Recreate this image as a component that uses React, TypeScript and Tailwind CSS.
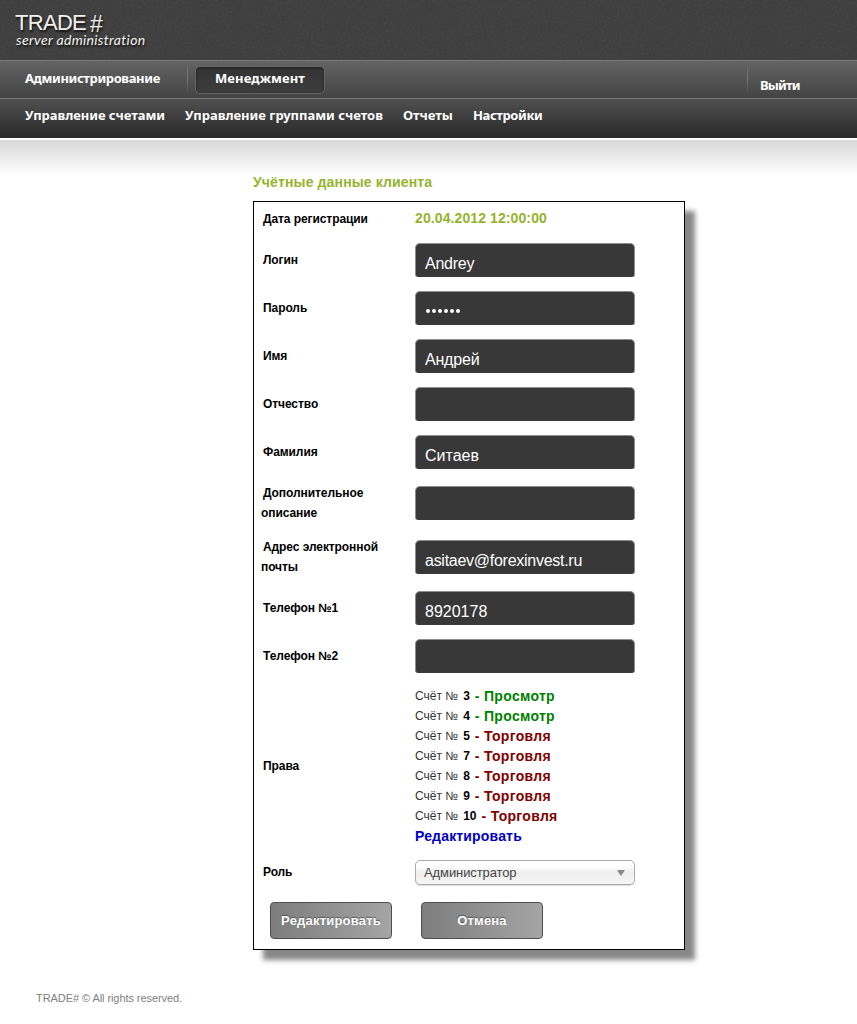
import React from "react";

const mainFont = "font-['Liberation_Sans',Arial,sans-serif]";
const navFont = "font-['Noto_Sans',Tahoma,sans-serif]";

type Field = { label: string; value: string; spacing?: string; tall?: boolean };

const fields: Field[] = [
  { label: "Логин", value: "Andrey", spacing: "tracking-[-0.25px]" },
  { label: "Пароль", value: "••••••" },
  { label: "Имя", value: "Андрей", spacing: "tracking-[-0.2px]" },
  { label: "Отчество", value: "" },
  { label: "Фамилия", value: "Ситаев" },
  { label: "Дополнительное описание", value: "", tall: true },
  { label: "Адрес электронной почты", value: "asitaev@forexinvest.ru", spacing: "tracking-[-0.27px]", tall: true },
  { label: "Телефон №1", value: "8920178" },
  { label: "Телефон №2", value: "" },
];

const accounts = [
  { id: 3, trade: false },
  { id: 4, trade: false },
  { id: 5, trade: true },
  { id: 7, trade: true },
  { id: 8, trade: true },
  { id: 9, trade: true },
  { id: 10, trade: true },
];

function Label({ children }: { children: string }) {
  return (
    <div className="w-[154px] shrink-0 pl-[7px] pr-6 text-[12px] font-bold leading-5 tracking-[-0.08px] text-black">
      <span className="ml-[2px]">{children}</span>
    </div>
  );
}

function Header() {
  return (
    <header className="relative h-[60px] overflow-hidden bg-[#3c3c3c] pl-[15px] pt-[14px] text-[#f2f0ec]">
      <svg className="absolute inset-0 h-full w-full opacity-[0.07]" aria-hidden="true">
        <filter id="grain">
          <feTurbulence type="fractalNoise" baseFrequency="0.45" numOctaves="2" seed="4" />
          <feColorMatrix type="saturate" values="0" />
        </filter>
        <rect width="100%" height="100%" filter="url(#grain)" />
      </svg>
      <div className="relative flex h-[18px] items-center whitespace-nowrap text-[22px] leading-[18px] [text-shadow:1px_2px_2px_#111]">
        <span className="w-[75px] tracking-[-0.7px]">TRADE</span>
        <span className="pt-px text-[23px]">#</span>
      </div>
      <div className="relative ml-px whitespace-nowrap font-[Lato,'Open_Sans',sans-serif] text-[14px] italic leading-4 tracking-[0.33px] [text-shadow:1px_2px_2px_#111]">
        server administration
      </div>
    </header>
  );
}

function Nav() {
  return (
    <nav className={`${navFont} text-[13px] font-bold leading-[18px] text-white whitespace-nowrap`}>
      <div className="flex h-[38px] border-t border-[#7a7a7a] bg-linear-to-b from-[#646464] to-[#434343] pl-[25px]">
        <span className="w-[162px] pt-[8px] tracking-[-0.38px]">Администрирование</span>
        <span className="mt-1 h-7 w-px bg-linear-to-b from-[#6a6a6a] via-[#777] to-[#4c4c4c]" />
        <span className="ml-[7px] mt-[5px] flex h-7 w-[130px] justify-center rounded-[5px] border border-[#636363] bg-linear-to-b from-[#333] to-[#3d3d3d] pt-[2px] tracking-[0.1px] shadow-[inset_0_1px_3px_#222]">
          Менеджмент
        </span>
        <span className="ml-auto mt-1 h-7 w-px bg-linear-to-b from-[#626262] via-[#777] to-[#4c4c4c]" />
        <span className="w-[109px] pl-3 pt-[15px] tracking-[-0.8px]">Выйти</span>
      </div>
      <div className="flex h-10 gap-5 border-t border-[#777] bg-linear-to-b from-[#505050] to-[#292929] pl-[25px] pt-[7px]">
        <span className="tracking-[-0.05px]">Управление счетами</span>
        <span className="tracking-[-0.02px]">Управление группами счетов</span>
        <span>Отчеты</span>
        <span className="tracking-[-0.4px]">Настройки</span>
      </div>
    </nav>
  );
}

function FieldRow({ field }: { field: Field }) {
  return (
    <div className={`flex items-center ${field.tall ? "h-[54px]" : "h-12"}`}>
      <Label>{field.label}</Label>
      <div className="ml-[7px] flex h-[34px] w-[220px] items-center rounded-t-[5px] rounded-b-[3px] border border-b-0 border-[#8d8d8d] bg-[#383838] pl-[9px] pt-[7px] text-[16px] leading-5 text-white">
        {field.value.startsWith("•") ? (
          <span className="mb-[2px] flex gap-[2px] pl-px">
            {Array.from(field.value).map((_, i) => (
              <span key={i} className="h-1 w-1 rounded-full bg-white" />
            ))}
          </span>
        ) : (
          <span className={field.spacing ?? ""}>{field.value}</span>
        )}
      </div>
    </div>
  );
}

function FormButton({ children }: { children: string }) {
  return (
    <button className="h-[37px] w-[122px] rounded-[4px] border border-[#4f4f4f] bg-linear-to-r from-[#7d7d7d] to-[#a5a5a5] text-[13px] font-bold tracking-[0.2px] text-white [text-shadow:0_-1px_1px_#555]">
      {children}
    </button>
  );
}

export default function App() {
  return (
    <div className={`${mainFont} flex h-[1024px] w-[857px] flex-col bg-white`}>
      <Header />
      <Nav />
      <main className="mt-[2px] flex-1 bg-linear-to-b from-[#d8d8d8] to-white bg-[length:100%_36px] bg-no-repeat pl-[253px] pt-8">
        <h1 className="h-[29px] text-[14px] font-bold leading-5 tracking-[0.13px] text-[#95b42e]">Учётные данные клиента</h1>
        <section className="h-[749px] w-[432px] border border-black bg-white shadow-[10px_10px_5px_#888]">
          <div className="flex h-[34px] items-center">
            <Label>Дата регистрации</Label>
            <span className="mb-[2px] ml-[7px] text-[14px] font-bold leading-5 tracking-[0.1px] text-[#95b42e]">20.04.2012 12:00:00</span>
          </div>
          {fields.map((field) => (
            <FieldRow key={field.label} field={field} />
          ))}
          <div className="flex h-[172px] items-center">
            <Label>Права</Label>
            <div className="ml-[7px] text-[14px] font-bold leading-5">
              {accounts.map((account) => (
                <div key={account.id} className="flex h-5 items-center whitespace-pre">
                  <span className="text-[12px] font-normal text-[#333]">Счёт №</span>
                  <span className="ml-[5px] text-[12px] text-black">{account.id}</span>
                  <span className={account.trade ? "ml-[5px] tracking-[0.3px] text-[#800000]" : "ml-[5px] tracking-[0.3px] text-[#008000]"}>
                    {account.trade ? "- Торговля" : "- Просмотр"}
                  </span>
                </div>
              ))}
              <a className="block tracking-[0.17px] text-[#0000c4]">Редактировать</a>
            </div>
          </div>
          <div className="flex h-[41px] items-center">
            <div className="mb-[2px]">
              <Label>Роль</Label>
            </div>
            <div className="ml-[7px] flex h-[25px] w-[220px] items-center justify-between rounded-[5px] border border-[#aaa] bg-linear-to-b from-white from-20% via-[#eee] via-52% to-[#f6f6f6] pl-2 pr-[9px] pt-px text-[13px] tracking-[-0.1px] text-[#444] shadow-[0_1px_1px_#ddd]">
              <span>Администратор</span>
              <svg width="8" height="6" viewBox="0 0 8 6">
                <path d="M0 0h8L4 6z" fill="#888" />
              </svg>
            </div>
          </div>
          <div className="flex gap-[29px] pl-4 pt-[9px]">
            <FormButton>Редактировать</FormButton>
            <FormButton>Отмена</FormButton>
          </div>
        </section>
      </main>
      <footer className="h-[36px] pl-9 text-[11px] leading-5 tracking-[-0.07px] text-[#808080]">TRADE# © All rights reserved.</footer>
    </div>
  );
}
